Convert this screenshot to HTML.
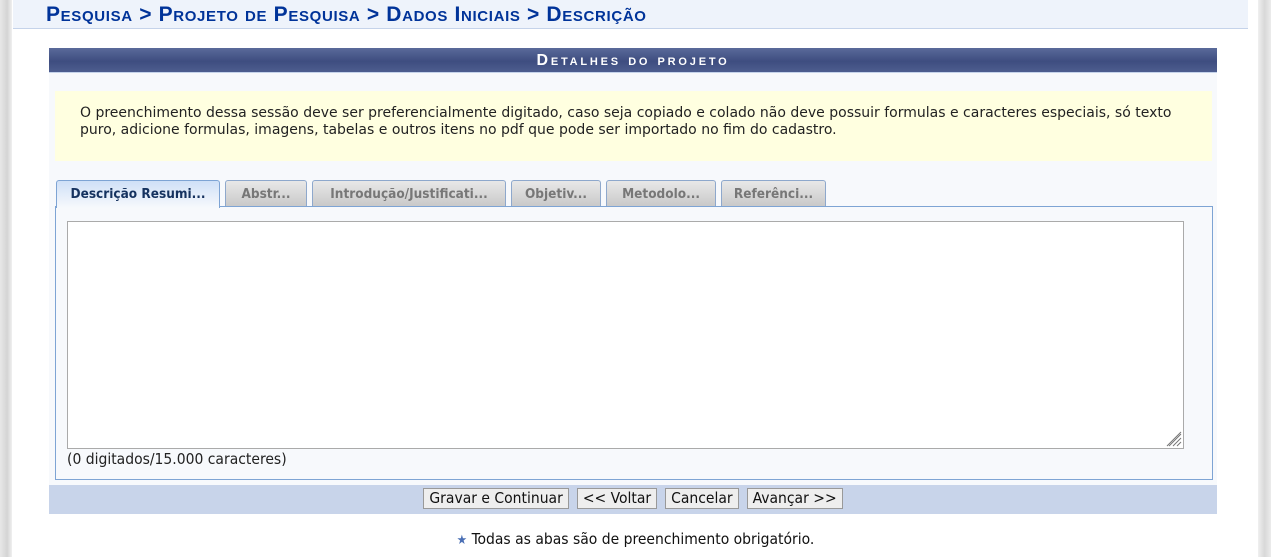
<!DOCTYPE html>
<html><head><meta charset="utf-8"><style>
*{box-sizing:border-box;margin:0;padding:0}
body{width:1271px;height:557px;background:#fff;position:relative;overflow:hidden;font-family:"DejaVu Sans",sans-serif}
.lb{position:absolute;left:0;top:0;width:12px;height:557px;background:linear-gradient(90deg,#e8e8e8,#d4d4d4 60%,#f0f0f0)}
.rb{position:absolute;left:1258px;top:0;width:13px;height:557px;background:linear-gradient(90deg,#f0f0f0,#d8d8d8 50%,#ececec)}
.hdr{position:absolute;left:13px;top:0;width:1235px;height:29px;background:#eef3fb;border-bottom:1px solid #c5d3ea}
.bc{position:absolute;left:46px;top:3px;font:bold 21px "Liberation Sans",sans-serif;font-variant:small-caps;color:#003399;letter-spacing:.65px;white-space:nowrap}
.box{position:absolute;left:49px;top:48px;width:1168px;height:466px;background:#f7f9fc}
.cap{height:25px;background:linear-gradient(#5a6a9a,#3e4d80 55%,#4d5d8e);color:#fff;text-align:center;font:bold 16px "Liberation Sans",sans-serif;font-variant:small-caps;letter-spacing:2.8px;line-height:26px;border-bottom:1px solid #c5d3ea}
.note{position:absolute;left:6px;top:43px;width:1157px;height:70px;background:#ffffe0;padding:14px 0 0 25px;font-size:14px;line-height:16.5px;color:#222}
.tab{position:absolute;top:132px;height:27px;border:1px solid #8ea8cc;border-bottom:none;border-radius:3px 3px 0 0;background:linear-gradient(#e8e8e8,#c8c8c8);font:bold 13.5px "DejaVu Sans Condensed","DejaVu Sans",sans-serif;color:#777;text-align:center;line-height:27px}
.tab.a{background:linear-gradient(#cfe0f7,#f7f9fc);color:#15325f;height:28px;z-index:2;border-color:#7ea4d4}
.panel{position:absolute;left:6px;top:158px;width:1158px;height:274px;border:1px solid #7ea4d4;background:#f7f9fc}
.ta{position:absolute;left:11px;top:14px;width:1117px;height:228px;border:1px solid #aaa;background:#fff}
.cnt{position:absolute;left:11px;top:243px;font:15.5px "DejaVu Sans Condensed","DejaVu Sans",sans-serif;color:#222}
.bar{position:absolute;left:0;top:437px;width:1168px;height:29px;background:#c8d4ea;text-align:center;padding-top:3px}
.btn{display:inline-block;height:21px;border:1px solid #999;background:#eee;font:15.5px "DejaVu Sans Condensed","DejaVu Sans",sans-serif;color:#111;padding:0 5px;line-height:19px;margin:0 4px}
.foot{position:absolute;left:0;width:1271px;top:530px;text-align:center;font:15.5px "DejaVu Sans Condensed","DejaVu Sans",sans-serif;color:#111}
</style></head><body>
<div class="lb"></div><div class="rb"></div>
<div class="hdr"></div>
<div class="bc">Pesquisa &gt; Projeto de Pesquisa &gt; Dados Iniciais &gt; Descrição</div>
<div class="box">
<div class="cap">Detalhes do projeto</div>
<div class="note">O preenchimento dessa sessão deve ser preferencialmente digitado, caso seja copiado e colado não deve possuir formulas e caracteres especiais, só texto puro, adicione formulas, imagens, tabelas e outros itens no pdf que pode ser importado no fim do cadastro.</div>
<div class="tab a" style="left:7px;width:164px">Descrição Resumi...</div>
<div class="tab" style="left:176px;width:82px">Abstr...</div>
<div class="tab" style="left:263px;width:194px">Introdução/Justificati...</div>
<div class="tab" style="left:462px;width:90px">Objetiv...</div>
<div class="tab" style="left:557px;width:110px">Metodolo...</div>
<div class="tab" style="left:672px;width:105px">Referênci...</div>
<div class="panel">
<div class="ta"><svg style="position:absolute;right:1px;bottom:1px" width="16" height="16"><path d="M15 3L3 15M15 7L7 15M15 11L11 15M15 1L1 15" stroke="#777" stroke-width="1"/></svg></div>
<div class="cnt">(0 digitados/15.000 caracteres)</div>
</div>
<div class="bar"><span class="btn">Gravar e Continuar</span><span class="btn">&lt;&lt; Voltar</span><span class="btn">Cancelar</span><span class="btn">Avançar &gt;&gt;</span></div>
</div>
<div class="foot"><span style="color:#4a6fb5;font-size:13px">★</span> Todas as abas são de preenchimento obrigatório.</div>
</body></html>
